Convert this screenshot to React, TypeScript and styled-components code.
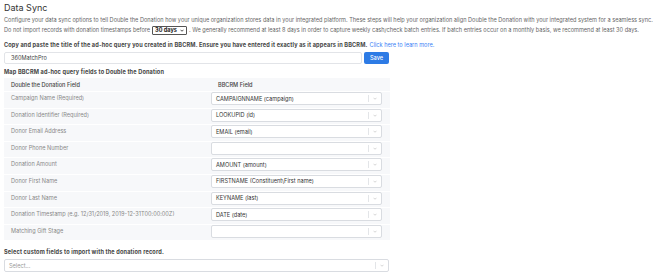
import React from 'react';
import styled, { createGlobalStyle } from 'styled-components';

const GlobalStyle = createGlobalStyle`
  body {
    margin: 0;
    background: #fff;
    font-family: Inter, "Liberation Sans", sans-serif;
    color: #333;
  }
  * { box-sizing: border-box; }
`;

const Page = styled.div`
  padding: 2px 4px 0 4px;
  width: 670px;
  height: 275px;
  overflow: hidden;
`;

const Title = styled.h1`
  margin: 0;
  font-size: 9px;
  line-height: 12px;
  font-weight: 400;
  color: #333;
`;

const Desc = styled.p<{ $first?: boolean }>`
  margin: 0;
  font-size: 5.6px;
  line-height: 10px;
  color: #666;
  white-space: nowrap;
  display: flex;
  align-items: center;
  gap: 2px;
  margin-top: ${(p) => (p.$first ? '1px' : '0')};
`;

const DaysSelect = styled.span`
  display: inline-flex;
  align-items: center;
  height: 9px;
  padding: 0 2px;
  border: 1px solid #555;
  border-radius: 1px;
  font-weight: 700;
  color: #222;
  font-size: 5.6px;
  gap: 3px;
`;

const Label = styled.div<{ $top?: number }>`
  margin-top: ${(p) => p.$top ?? 0}px;
  font-size: 5.6px;
  line-height: 10px;
  font-weight: 700;
  letter-spacing: 0.15px;
  color: #444;
  white-space: nowrap;
`;

const Link = styled.a`
  color: #3b82f6;
  font-weight: 400;
  letter-spacing: 0;
  text-decoration: none;
  margin-left: 2px;
`;

const QueryRow = styled.div`
  margin-top: 2px;
  display: flex;
  gap: 2px;
  width: 385px;
`;

const TextInput = styled.div`
  flex: 1;
  height: 12px;
  border: 1px solid #e2e4e8;
  border-radius: 2px;
  padding-left: 6px;
  font-size: 5.6px;
  line-height: 10px;
  color: #444;
`;

const SaveButton = styled.button`
  width: 25px;
  height: 12px;
  border: none;
  border-radius: 2px;
  background: #2d7be5;
  color: #fff;
  font-family: inherit;
  font-size: 5.6px;
  font-weight: 500;
  padding: 0;
`;

const Table = styled.div`
  margin-top: 1px;
  width: 386px;
  background: #f7f8fa;
  display: flex;
  flex-direction: column;
`;

const Row = styled.div<{ $head?: boolean }>`
  display: grid;
  grid-template-columns: 207px 1fr;
  height: ${(p) => (p.$head ? '13px' : '16.6px')};
  border-top: ${(p) => (p.$head ? 'none' : '1px solid #fff')};
  align-items: start;
`;

const Cell = styled.div<{ $head?: boolean }>`
  font-size: 5.6px;
  line-height: 10px;
  padding-top: ${(p) => (p.$head ? '2px' : '1px')};
  padding-left: 7px;
  color: ${(p) => (p.$head ? '#444' : '#888')};
  font-weight: ${(p) => (p.$head ? 500 : 400)};
  white-space: nowrap;
`;

const SelectBox = styled.div<{ $placeholder?: boolean; $width?: number; $mt?: number }>`
  display: flex;
  align-items: center;
  height: 13px;
  width: ${(p) => p.$width ?? 171}px;
  margin-top: ${(p) => p.$mt ?? 0}px;
  background: #fff;
  border: 1px solid #d9dce1;
  border-radius: 2px;
  font-size: 5.6px;
  color: ${(p) => (p.$placeholder ? '#999' : '#333')};
  padding-left: 4px;
  white-space: nowrap;
`;

const SelectValue = styled.span`
  flex: 1;
`;

const Separator = styled.span`
  width: 1px;
  height: 7px;
  background: #e3e5e8;
`;

const Chevron = styled.span`
  width: 12px;
  display: flex;
  justify-content: center;
  align-items: center;
`;

const ChevronIcon = () => (
  <svg width="4" height="3" viewBox="0 0 8 5">
    <path d="M1 1l3 3 3-3" stroke="#aaa" strokeWidth="1" fill="none" />
  </svg>
);

const Select = ({ value, placeholder, width, mt }: { value?: string; placeholder?: string; width?: number; mt?: number }) => (
  <SelectBox $placeholder={!value} $width={width} $mt={mt}>
    <SelectValue>{value || placeholder || ''}</SelectValue>
    <Separator />
    <Chevron>
      <ChevronIcon />
    </Chevron>
  </SelectBox>
);

const fields: [string, string][] = [
  ['Campaign Name (Required)', 'CAMPAIGNNAME (campaign)'],
  ['Donation Identifier (Required)', 'LOOKUPID (id)'],
  ['Donor Email Address', 'EMAIL (email)'],
  ['Donor Phone Number', ''],
  ['Donation Amount', 'AMOUNT (amount)'],
  ['Donor First Name', 'FIRSTNAME (Constituent\\First name)'],
  ['Donor Last Name', 'KEYNAME (last)'],
  ['Donation Timestamp (e.g. 12/31/2019, 2019-12-31T00:00:00Z)', 'DATE (date)'],
  ['Matching Gift Stage', ''],
];

export default function App() {
  return (
    <Page>
      <GlobalStyle />
      <Title>Data Sync</Title>
      <Desc $first>
        Configure your data sync options to tell Double the Donation how your unique organization stores data in your
        integrated platform. These steps will help your organization align Double the Donation with your integrated
        system for a seamless sync.
      </Desc>
      <Desc>
        Do not import records with donation timestamps before
        <DaysSelect>
          30 days
          <svg width="4" height="3" viewBox="0 0 8 5">
            <path d="M1 1l3 3 3-3" stroke="#222" strokeWidth="1.6" fill="none" />
          </svg>
        </DaysSelect>
        . We generally recommend at least 8 days in order to capture weekly cash/check batch entries. If batch entries
        occur on a monthly basis, we recommend at least 30 days.
      </Desc>
      <Label $top={5}>
        Copy and paste the title of the ad-hoc query you created in BBCRM. Ensure you have entered it exactly as it
        appears in BBCRM.
        <Link href="#">Click here to learn more.</Link>
      </Label>
      <QueryRow>
        <TextInput>360MatchPro</TextInput>
        <SaveButton>Save</SaveButton>
      </QueryRow>
      <Label $top={3}>Map BBCRM ad-hoc query fields to Double the Donation</Label>
      <Table>
        <Row $head>
          <Cell $head>Double the Donation Field</Cell>
          <Cell $head>BBCRM Field</Cell>
        </Row>
        {fields.map(([name, value]) => (
          <Row key={name}>
            <Cell>{name}</Cell>
            <Select value={value} />
          </Row>
        ))}
      </Table>
      <Label $top={7}>Select custom fields to import with the donation record.</Label>
      <Select placeholder="Select..." width={385} mt={2} />
    </Page>
  );
}
